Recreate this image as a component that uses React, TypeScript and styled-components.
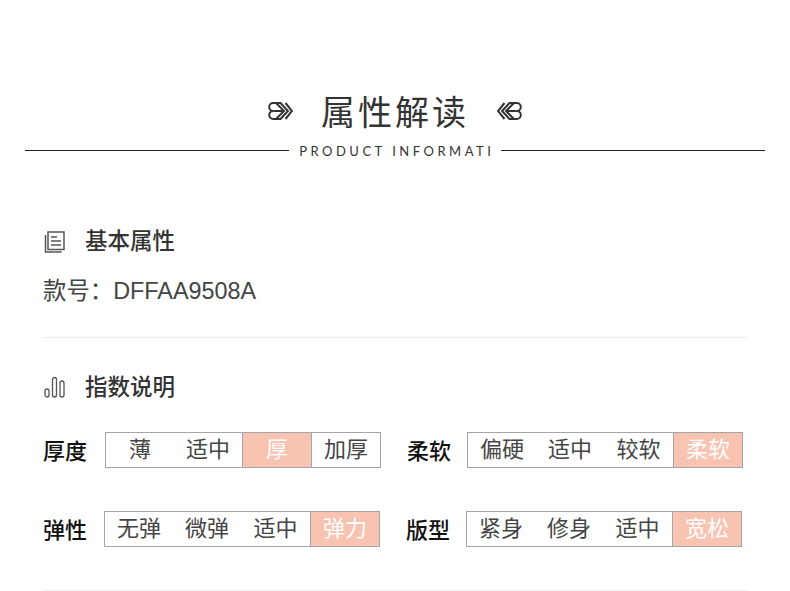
import React from "react";
import styled, { createGlobalStyle } from "styled-components";

const GlobalStyle = createGlobalStyle`
  html, body {
    margin: 0;
    padding: 0;
    background: #fff;
  }
  body {
    width: 790px;
    height: 591px;
    overflow: hidden;
    font-family: "Liberation Sans", "Noto Sans CJK SC", sans-serif;
  }
`;

const Page = styled.div`
  width: 790px;
  height: 591px;
  padding-top: 89px;
  box-sizing: border-box;
  overflow: hidden;
`;

const TitleRow = styled.div`
  display: flex;
  justify-content: center;
  align-items: center;
  height: 44px;
  gap: 28px;
`;

const Title = styled.h1`
  margin: 0;
  font: 400 34px/44px "Noto Sans CJK SC", sans-serif;
  letter-spacing: 3px;
  color: #333;
`;

const SubRow = styled.div`
  display: flex;
  align-items: center;
  margin: 8px 25px 0;
  height: 18px;
  gap: 10px;
`;

const Rule = styled.span`
  flex: 1;
  height: 1px;
  background: #222;
`;

const SubTitle = styled.span`
  font: 400 13px/20px Lato, sans-serif;
  letter-spacing: 3.5px;
  margin-right: -3.5px;
  padding-top: 2px;
  color: #333;
`;

const Section = styled.section<{ $top: number; $height: number }>`
  margin: ${(p) => p.$top}px 43px 0;
  height: ${(p) => p.$height}px;
  border-bottom: 1px solid #eee;
`;

const SectionHead = styled.div`
  display: flex;
  align-items: center;
  gap: 20px;
  height: 30px;
  padding-left: 1px;
`;

const SectionName = styled.h2`
  margin: 0 0 2px;
  font: 500 22.5px/28px "Noto Sans CJK SC", sans-serif;
  color: #333;
`;

const IconSlot = styled.span<{ $drop: number }>`
  display: flex;
  margin-top: ${(p) => p.$drop}px;
`;

const StyleNo = styled.p`
  margin: 21px 0 0;
  font: 400 23.4px/30px "Liberation Sans", "Noto Sans CJK SC", sans-serif;
  color: #444;
`;

const Grid = styled.div`
  display: grid;
  grid-template-columns: 363px 340px;
  row-gap: 43px;
  margin-top: 31px;
`;

const Metric = styled.div<{ $shift?: number }>`
  display: flex;
  align-items: center;
  height: 36px;
  margin-left: ${(p) => p.$shift ?? 0}px;
`;

const MetricName = styled.span<{ $width: number }>`
  width: ${(p) => p.$width}px;
  margin-bottom: 2px;
  font: 500 22px/34px "Noto Sans CJK SC", sans-serif;
  color: #111;
`;

const Options = styled.div`
  display: grid;
  grid-template-columns: 68px 68px 69px 69px;
  width: 276px;
  height: 36px;
  box-sizing: border-box;
  border: 1px solid #a5a5a5;
`;

const Option = styled.span<{ $active: boolean; $divider: boolean }>`
  display: flex;
  align-items: center;
  justify-content: center;
  font: 400 22px/24px "Noto Sans CJK SC", sans-serif;
  padding-bottom: 7px;
  box-sizing: border-box;
  color: ${(p) => (p.$active ? "#fff" : "#444")};
  background: ${(p) => (p.$active ? "#f8c3b1" : "transparent")};
  border-left: ${(p) => (p.$divider ? "1px solid #a5a5a5" : "0")};
`;

const Knot = ({ flip }: { flip?: boolean }) => (
  <svg
    width="25"
    height="20"
    viewBox="0 0 25 20"
    fill="none"
    stroke="#333"
    strokeWidth="2"
    style={flip ? { transform: "scaleX(-1)" } : undefined}
  >
    <path d="M13 2H5.2a4 4 0 0 0 0 8 4 4 0 0 0 0 8H13" />
    <path d="M8 2l8 8-8 8" />
    <path d="M12.5 2l7.5 8-7.5 8" />
    <path d="M17.5 2l6.5 8-6.5 8" />
    <path d="M5.2 10H16" />
  </svg>
);

const DocIcon = () => (
  <svg width="21" height="22" viewBox="0 0 21 22" fill="none" stroke="#555" strokeWidth="1.5">
    <rect x="4" y="1" width="16" height="17.5" />
    <path d="M1.5 4v17h16" />
    <path d="M7 6h6M7 10h10M7 14h10" strokeWidth="1.7" />
  </svg>
);

const BarsIcon = () => (
  <svg width="21" height="22" viewBox="0 0 21 22" fill="none" stroke="#555" strokeWidth="1.3">
    <rect x="1" y="13" width="4" height="8" rx="2" />
    <rect x="8.5" y="1.5" width="4" height="19.5" rx="2" />
    <rect x="16" y="5" width="4" height="16" rx="2" />
  </svg>
);

interface IMetric {
  name: string;
  nameWidth: number;
  shift?: number;
  options: string[];
  active: number;
}

const metrics: IMetric[] = [
  { name: "厚度", nameWidth: 62, options: ["薄", "适中", "厚", "加厚"], active: 2 },
  { name: "柔软", nameWidth: 60, shift: 1, options: ["偏硬", "适中", "较软", "柔软"], active: 3 },
  { name: "弹性", nameWidth: 61, options: ["无弹", "微弹", "适中", "弹力"], active: 3 },
  { name: "版型", nameWidth: 60, options: ["紧身", "修身", "适中", "宽松"], active: 3 },
];

const App: React.FC = () => (
  <>
    <GlobalStyle />
    <Page>
      <TitleRow>
        <Knot />
        <Title>属性解读</Title>
        <Knot flip />
      </TitleRow>
      <SubRow>
        <Rule />
        <SubTitle>PRODUCT INFORMATI</SubTitle>
        <Rule />
      </SubRow>
      <Section $top={66} $height={112}>
        <SectionHead>
          <IconSlot $drop={4}>
            <DocIcon />
          </IconSlot>
          <SectionName>基本属性</SectionName>
        </SectionHead>
        <StyleNo>款号：DFFAA9508A</StyleNo>
      </Section>
      <Section $top={33} $height={219}>
        <SectionHead>
          <IconSlot $drop={2}>
            <BarsIcon />
          </IconSlot>
          <SectionName>指数说明</SectionName>
        </SectionHead>
        <Grid>
          {metrics.map((m) => (
            <Metric key={m.name} $shift={m.shift}>
              <MetricName $width={m.nameWidth}>{m.name}</MetricName>
              <Options>
                {m.options.map((o, i) => (
                  <Option key={o} $active={i === m.active} $divider={i === m.active || i === 3}>
                    {o}
                  </Option>
                ))}
              </Options>
            </Metric>
          ))}
        </Grid>
      </Section>
    </Page>
  </>
);

export default App;
